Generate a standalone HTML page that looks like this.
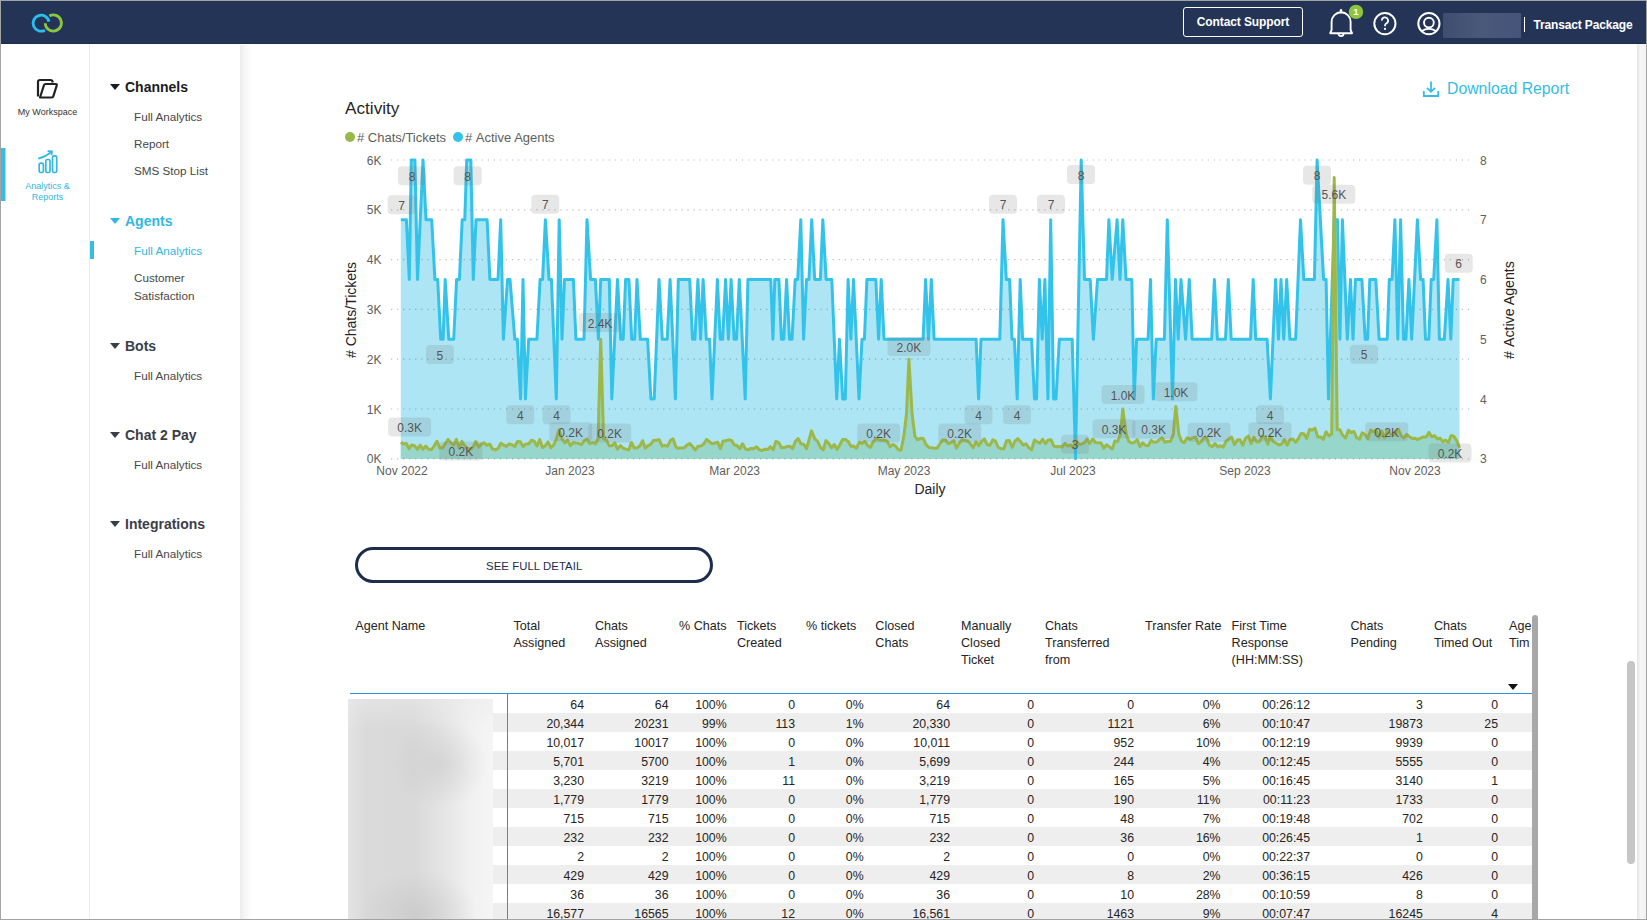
<!DOCTYPE html>
<html><head><meta charset="utf-8">
<style>
*{box-sizing:border-box;margin:0;padding:0}
html,body{width:1647px;height:920px;overflow:hidden;background:#fff;font-family:"Liberation Sans",sans-serif;color:#252423}
.abs{position:absolute}
#frame{position:absolute;left:0;top:0;width:1647px;height:920px;border:1px solid #a3a3a3;pointer-events:none;z-index:50}
#hdr{position:absolute;left:1px;top:1px;width:1645px;height:43px;background:#233457;box-shadow:inset 0 -1px 0 #1b2d50;z-index:5}
.btn-cs{position:absolute;left:1183px;top:7px;width:120px;height:30px;border:1.5px solid #fff;border-radius:3px;color:#fff;font-weight:bold;font-size:12px;line-height:27px;text-align:center;letter-spacing:-0.1px}
.tp{position:absolute;left:1534px;top:15px;color:#fff;font-weight:bold;font-size:12px;line-height:16px;letter-spacing:-0.15px}
.blurbox{position:absolute;left:1442px;top:13px;width:78px;height:25px;background:linear-gradient(90deg,#3f4e70,#4a587a 50%,#46547a)}
.hdiv{position:absolute;left:1524px;top:17px;width:1.5px;height:14px;background:#fff}
#rail{position:absolute;left:1px;top:44px;width:89px;height:875px;background:#fff;border-right:1px solid #ececec}
.rail-t{position:absolute;left:2px;width:89px;text-align:center;font-size:9px;line-height:11px}
#subnav{position:absolute;left:90px;top:44px;width:150px;height:875px;background:#fff}
#shadow{position:absolute;left:240px;top:45px;width:12px;height:874px;background:linear-gradient(90deg,#ececec,#f6f6f6 40%,#fff)}
.sec{position:absolute;left:125px;font-weight:bold;font-size:14px;line-height:18px;color:#1b1b1b}
.sec.blue{color:#31b7e3}
.sec.grey{color:#3b3e48}
.tri{position:absolute;left:110px;width:0;height:0;border-left:5px solid transparent;border-right:5px solid transparent;border-top:6px solid #1b1b1b}
.tri.blue{border-top-color:#31b7e3}
.tri.grey{border-top-color:#3b3e48}
.item{position:absolute;left:134px;font-size:11.7px;line-height:15px;color:#484848}
.item.blue{color:#31b7e3}
#main{position:absolute;left:240px;top:44px;width:1396px;height:875px;background:#fff}
.title{position:absolute;left:345px;top:97.5px;font-size:17.2px;line-height:20px;color:#252423}
.legend{position:absolute;top:130px;font-size:13px;line-height:15px;color:#605e5c}
.dot{position:absolute;top:132px;width:10px;height:10px;border-radius:50%}
.dl{position:absolute;left:1447px;top:78.7px;font-size:15.8px;line-height:19px;color:#33bde5}
#chart{position:absolute;left:0;top:0;width:1647px;height:920px}
#chart text{font-family:"Liberation Sans",sans-serif}
.ax{fill:#605e5c;font-size:12px}
.lab{fill:#555;font-size:12px}
.seebtn{position:absolute;left:355px;top:547px;width:358px;height:36px;border:3px solid #1e2d4b;border-radius:18px;font-size:11.3px;line-height:32px;color:#1e2d4b;padding-left:128px;letter-spacing:0.1px}
.th{position:absolute;top:617.5px;font-size:12.6px;line-height:17px;color:#252423;white-space:nowrap}
.cell{position:absolute;font-size:12.3px;line-height:19px;color:#252423;white-space:nowrap}
.rowbg{position:absolute;left:493px;width:1039px;height:19px;background:#eeeeee}
#tclip{position:absolute;left:340px;top:600px;width:1192px;height:319px;overflow:hidden}
</style></head>
<body>
<div id="hdr">
  <svg class="abs" style="left:0;top:0" width="1645" height="43" viewBox="1 1 1645 43">
    <path d="M48.9,21.6 A8,8 0 1 0 44.9,30.2" fill="none" stroke="#29c0ee" stroke-width="2.8"/>
    <path d="M45.2,23.3 A8.1,8.1 0 1 0 49.4,15.9" fill="none" stroke="#8cc63f" stroke-width="2.8"/>
    <!-- bell -->
    <path d="M1330.2,33.2 L1352,33.2 L1350.6,30 L1350.6,21.8 A9.5,9.5 0 0 0 1331.6,21.8 L1331.6,30 Z" fill="none" stroke="#fff" stroke-width="1.9" stroke-linejoin="round"/>
    <path d="M1341,12.2 L1341,10.2" stroke="#fff" stroke-width="2.4" stroke-linecap="round"/>
    <path d="M1338.4,33.6 A2.6,2.6 0 0 0 1343.6,33.6" fill="none" stroke="#fff" stroke-width="1.8"/>
    <circle cx="1356" cy="11.9" r="7.2" fill="#8cc63f"/>
    <text x="1356" y="15.2" text-anchor="middle" font-size="9.5" font-weight="bold" fill="#fff" font-family="Liberation Sans">1</text>
    <!-- help -->
    <circle cx="1384.9" cy="23.6" r="10.6" fill="none" stroke="#fff" stroke-width="2"/>
    <path d="M1381.9,20.6 A3.1,3.1 0 1 1 1386.5,23.2 Q1385,24 1385,25.6 L1385,26.2" fill="none" stroke="#fff" stroke-width="1.7"/>
    <circle cx="1385" cy="28.9" r="1.1" fill="#fff"/>
    <!-- user -->
    <circle cx="1428.9" cy="23.6" r="10.6" fill="none" stroke="#fff" stroke-width="2"/>
    <circle cx="1428.9" cy="22.6" r="4.9" fill="none" stroke="#fff" stroke-width="1.9"/>
    <path d="M1421.5,31.2 Q1428.9,26.2 1436.3,31.2" fill="none" stroke="#fff" stroke-width="1.9"/>
  </svg>
  <div class="btn-cs" style="top:6px;left:1182px;padding-top:1px">Contact Support</div>
  <div class="blurbox" style="top:12px"></div>
  <div class="hdiv" style="top:16px;left:1523px;width:1.2px;height:15px"></div>
  <div class="tp" style="top:15.7px;left:1532.5px">Transact Package</div>
</div>

<div id="rail">
  <svg class="abs" style="left:-1px;top:-44px" width="89" height="260" viewBox="0 0 89 260">
    <path d="M38,96.5 L38,82 Q38,80 40,80 L50.5,80 Q52.5,80 52.8,82.5" fill="none" stroke="#222" stroke-width="2.2" stroke-linejoin="round"/>
    <path d="M40,97.5 L44,85 Q44.5,84 45.5,84 L55.8,84 Q57.2,84 56.8,85.3 L53.3,96.3 Q53,97.5 51.7,97.5 Z" fill="none" stroke="#222" stroke-width="2.2" stroke-linejoin="round"/>
    <rect x="39.2" y="163.2" width="4.2" height="9.3" rx="1.6" fill="none" stroke="#31b7e3" stroke-width="1.7"/>
    <rect x="45.8" y="159.5" width="4.2" height="13" rx="1.6" fill="none" stroke="#31b7e3" stroke-width="1.7"/>
    <rect x="52.5" y="155.8" width="4.2" height="16.7" rx="1.6" fill="none" stroke="#31b7e3" stroke-width="1.7"/>
    <path d="M38.2,158.6 Q45,157 51.5,151.8" fill="none" stroke="#31b7e3" stroke-width="1.7"/>
    <path d="M47.6,151.2 L51.9,151.3 L51.6,155.3" fill="none" stroke="#31b7e3" stroke-width="1.7"/>
    <rect x="1" y="148" width="4.5" height="53" fill="#35bde6"/>
  </svg>
  <div class="rail-t" style="top:63px;color:#333">My Workspace</div>
  <div class="rail-t" style="top:137px;color:#31b7e3;line-height:10.5px">Analytics &amp;<br>Reports</div>
</div>

<div id="subnav"></div>
<div class="tri" style="top:84px"></div><div class="sec" style="top:78px">Channels</div>
<div class="item" style="top:109px">Full Analytics</div>
<div class="item" style="top:136px">Report</div>
<div class="item" style="top:163px">SMS Stop List</div>
<div class="tri blue" style="top:218px"></div><div class="sec blue" style="top:212px">Agents</div>
<div class="abs" style="left:90px;top:241px;width:4px;height:18px;background:#35bde6"></div>
<div class="item blue" style="top:243px">Full Analytics</div>
<div class="item" style="top:270px">Customer</div>
<div class="item" style="top:288px">Satisfaction</div>
<div class="tri grey" style="top:343px"></div><div class="sec grey" style="top:337px">Bots</div>
<div class="item" style="top:368px">Full Analytics</div>
<div class="tri grey" style="top:432px"></div><div class="sec grey" style="top:426px">Chat 2 Pay</div>
<div class="item" style="top:457px">Full Analytics</div>
<div class="tri grey" style="top:521px"></div><div class="sec grey" style="top:515px">Integrations</div>
<div class="item" style="top:546px">Full Analytics</div>

<div id="main"></div><div id="shadow"></div>
<div class="title">Activity</div>
<div class="dot" style="left:345px;background:#96b94a"></div>
<div class="legend" style="left:357px">#&nbsp;Chats/Tickets</div>
<div class="dot" style="left:453px;background:#33c3ea"></div>
<div class="legend" style="left:465px">#&nbsp;Active Agents</div>
<svg class="abs" style="left:1422px;top:80px" width="18" height="18" viewBox="0 0 18 18">
  <path d="M9,1.5 L9,11.5 M5,7.8 L9,11.8 L13,7.8 M1.8,11 L1.8,16 L16.2,16 L16.2,11" fill="none" stroke="#33bde5" stroke-width="1.8"/>
</svg>
<div class="dl">Download Report</div>

<svg id="chart" width="1647" height="920" viewBox="0 0 1647 920">
  <path d="M400.8,219.8 L406.4,219.8 L409.3,279.5 L411.3,160.0 L414.9,160.0 L417.5,279.5 L423.0,160.0 L426.0,219.8 L431.7,219.8 L434.9,279.5 L437.7,279.5 L440.7,339.3 L443.1,339.3 L445.2,279.5 L448.8,339.3 L453.7,339.3 L456.6,279.5 L459.4,279.5 L462.2,219.8 L464.8,219.8 L466.7,160.0 L470.8,160.0 L473.3,279.5 L476.0,219.8 L487.1,219.8 L489.9,279.5 L498.0,279.5 L500.7,219.8 L503.4,339.3 L507.5,279.5 L510.0,279.5 L514.8,339.3 L517.3,339.3 L520.6,399.0 L523.0,279.5 L525.4,399.0 L528.7,339.3 L536.9,339.3 L540.1,279.5 L542.6,279.5 L545.4,219.8 L549.0,279.5 L551.4,279.5 L556.3,399.0 L559.2,219.8 L562.0,339.3 L564.5,279.5 L573.4,279.5 L575.9,339.3 L584.0,339.3 L587.0,219.8 L590.6,279.5 L595.4,279.5 L598.4,339.3 L600.7,279.5 L609.3,279.5 L611.8,399.0 L617.5,279.5 L620.7,339.3 L623.2,339.3 L625.6,279.5 L628.9,279.5 L631.7,339.3 L634.6,339.3 L637.0,279.5 L640.3,339.3 L647.6,339.3 L650.9,399.0 L654.2,399.0 L659.0,279.5 L662.3,339.3 L667.2,339.3 L670.1,279.5 L675.4,399.0 L678.3,279.5 L689.7,279.5 L692.5,339.3 L694.9,339.3 L697.9,279.5 L700.6,339.3 L703.1,279.5 L706.3,339.3 L709.6,339.3 L712.0,399.0 L717.4,279.5 L720.2,339.3 L722.6,339.3 L725.6,279.5 L728.4,339.3 L731.1,279.5 L734.1,339.3 L736.5,339.3 L739.3,279.5 L745.2,399.0 L747.9,279.5 L770.8,279.5 L772.9,339.3 L774.8,279.5 L778.9,279.5 L781.4,339.3 L783.8,339.3 L786.6,279.5 L789.5,339.3 L792.0,339.3 L795.2,279.5 L797.7,279.5 L800.8,219.8 L803.6,339.3 L806.5,279.5 L809.0,279.5 L811.7,219.8 L814.7,279.5 L820.4,279.5 L822.8,219.8 L826.1,279.5 L831.8,279.5 L836.7,399.0 L839.5,339.3 L842.7,399.0 L845.3,399.0 L848.1,279.5 L850.9,339.3 L853.5,279.5 L859.0,399.0 L862.0,339.3 L864.4,339.3 L866.9,279.5 L875.8,279.5 L878.6,339.3 L881.2,279.5 L884.0,339.3 L923.1,339.3 L925.6,279.5 L928.5,339.3 L931.3,279.5 L934.1,339.3 L976.1,339.3 L978.6,399.0 L981.0,339.3 L999.8,339.3 L1003.0,219.8 L1006.3,279.5 L1009.6,279.5 L1012.0,339.3 L1014.4,339.3 L1017.2,399.0 L1020.2,279.5 L1022.6,339.3 L1031.6,339.3 L1034.5,399.0 L1036.5,399.0 L1039.4,279.5 L1042.2,339.3 L1044.9,279.5 L1047.9,399.0 L1050.7,219.8 L1053.6,399.0 L1056.0,399.0 L1059.3,339.3 L1072.2,339.3 L1075.5,458.8 L1081.2,160.0 L1084.5,279.5 L1090.2,279.5 L1093.4,339.3 L1097.5,279.5 L1106.5,279.5 L1108.9,219.8 L1112.2,279.5 L1117.1,219.8 L1120.0,279.5 L1122.8,219.8 L1126.0,279.5 L1131.8,279.5 L1134.2,399.0 L1136.6,339.3 L1148.1,339.3 L1150.5,279.5 L1153.3,399.0 L1156.2,339.3 L1164.4,339.3 L1167.3,219.8 L1172.5,399.0 L1175.5,279.5 L1178.2,339.3 L1181.0,279.5 L1185.6,339.3 L1189.3,279.5 L1192.1,339.3 L1211.7,339.3 L1214.4,279.5 L1217.4,339.3 L1225.5,339.3 L1228.3,279.5 L1231.2,339.3 L1250.5,339.3 L1253.2,279.5 L1255.7,339.3 L1267.1,339.3 L1270.4,399.0 L1275.6,279.5 L1278.5,339.3 L1281.0,279.5 L1283.7,339.3 L1286.7,279.5 L1289.9,339.3 L1295.6,339.3 L1300.5,219.8 L1303.8,279.5 L1314.4,279.5 L1317.1,160.0 L1323.6,279.5 L1326.1,279.5 L1328.5,399.0 L1334.2,219.8 L1337.5,219.8 L1339.9,339.3 L1342.4,219.8 L1347.3,339.3 L1350.5,279.5 L1353.0,339.3 L1355.4,279.5 L1361.9,279.5 L1365.2,339.3 L1367.6,339.3 L1369.8,279.5 L1375.8,279.5 L1379.1,339.3 L1387.2,339.3 L1389.3,279.5 L1392.1,279.5 L1394.9,219.8 L1397.8,339.3 L1400.6,219.8 L1403.5,339.3 L1405.9,339.3 L1408.9,279.5 L1411.7,339.3 L1417.4,219.8 L1420.6,279.5 L1423.1,279.5 L1425.5,339.3 L1428.8,339.3 L1431.2,279.5 L1433.7,279.5 L1436.9,219.8 L1439.4,339.3 L1444.3,339.3 L1448.0,279.5 L1450.8,339.3 L1453.2,279.5 L1459.5,279.5 L1459.5,458.8 L400.8,458.8 Z" fill="#ade5f4"/>
  <path d="M400.8,442.4 L403.6,443.9 L406.4,443.5 L409.1,448.7 L411.9,444.8 L414.7,445.9 L417.5,449.3 L420.3,445.2 L423.0,449.4 L425.8,446.0 L428.6,449.2 L431.4,449.6 L434.1,446.1 L436.9,441.2 L439.7,447.8 L442.5,447.9 L445.3,443.6 L448.0,439.5 L450.8,442.7 L453.6,445.1 L456.4,439.4 L459.2,448.3 L461.9,441.3 L464.7,446.0 L467.5,448.4 L470.3,449.2 L473.0,447.3 L475.8,441.5 L478.6,447.2 L481.4,444.0 L484.2,442.8 L486.9,445.4 L489.7,444.0 L492.5,448.9 L495.3,449.9 L498.1,448.5 L500.8,443.2 L503.6,444.9 L506.4,446.4 L509.2,443.8 L511.9,444.8 L514.7,446.6 L517.5,441.6 L520.3,441.8 L523.1,446.6 L525.8,444.0 L528.6,444.0 L531.4,440.3 L534.2,441.2 L537.0,446.0 L539.7,439.6 L542.5,447.5 L545.3,445.8 L548.1,441.9 L550.9,447.6 L553.6,445.1 L556.4,438.9 L559,429.9 L562.0,438.9 L564.7,443.0 L567.5,440.1 L570.3,445.6 L573.1,442.5 L575.9,443.0 L578.6,443.3 L581.4,444.6 L584.2,440.8 L587.0,439.0 L589.8,443.7 L592.5,442.5 L595.3,443.9 L598.1,438.9 L600.7,339.3 L603.6,438.8 L606.4,439.9 L609.2,445.8 L612.0,445.8 L614.8,442.8 L617.5,449.2 L620.3,445.6 L623.1,448.1 L625.9,449.1 L628.7,449.9 L631.4,442.5 L634.2,448.0 L637.0,447.7 L639.8,446.1 L642.6,440.7 L645.3,448.2 L648.1,445.6 L650.9,444.1 L653.7,440.2 L656.4,440.2 L659.2,439.7 L662.0,445.9 L664.8,445.5 L667.6,446.1 L670.3,440.6 L673.1,438.8 L675.9,447.1 L678.7,448.3 L681.5,447.9 L684.2,447.8 L687.0,445.1 L689.8,443.6 L692.6,446.7 L695.3,450.1 L698.1,446.2 L700.9,446.1 L703.7,444.0 L706.5,439.5 L709.2,441.5 L712.0,443.7 L714.8,443.0 L717.6,442.2 L720.4,448.7 L723.1,440.9 L725.9,440.8 L728.7,439.7 L731.5,440.4 L734.2,444.8 L737.0,445.5 L739.8,448.8 L742.6,443.7 L745.4,448.9 L748.1,449.8 L750.9,448.4 L753.7,448.7 L756.5,446.8 L759.3,449.6 L762.0,450.6 L764.8,449.2 L767.6,449.5 L770.4,446.7 L773.2,449.8 L775.9,441.4 L778.7,442.6 L781.5,447.8 L784.3,447.6 L787.0,446.6 L789.8,446.2 L792.6,448.7 L795.4,441.4 L798.2,438.6 L800.9,443.7 L803.7,444.4 L806.5,448.8 L809.3,438.9 L811.5,430.9 L814.8,438.9 L817.6,441.4 L820.4,447.4 L823.2,450.0 L825.9,440.6 L828.7,443.4 L831.5,447.9 L834.3,444.5 L837.1,449.4 L839.8,445.0 L842.6,439.4 L845.4,439.6 L848.2,441.4 L851.0,446.4 L853.7,446.1 L856.5,448.2 L859.3,442.2 L862.1,443.6 L864.8,441.3 L867.6,445.6 L870.4,447.5 L873.2,441.6 L876.0,438.7 L878.7,439.6 L881.5,440.3 L884.3,440.2 L887.1,441.1 L889.9,446.7 L892.6,444.6 L895.4,445.9 L898.2,449.6 L901.0,450.3 L903.8,436.4 L906.5,414.0 L908.9,359.2 L912.1,414.0 L914.9,436.4 L917.6,439.7 L920.4,438.3 L923.2,438.4 L926.0,444.7 L928.8,447.4 L931.5,447.8 L934.3,448.2 L937.1,448.2 L939.9,443.7 L942.7,440.0 L945.4,440.0 L948.2,443.8 L951.0,442.6 L953.8,440.9 L956.5,448.1 L959.3,443.3 L962.1,439.8 L964.9,440.5 L967.7,441.0 L970.4,444.0 L973.2,447.7 L976.0,441.9 L978.8,445.7 L981.6,441.4 L984.3,438.8 L987.1,444.5 L989.9,445.4 L992.7,439.8 L995.5,441.2 L998.2,447.3 L1001.0,448.8 L1003.8,448.8 L1006.6,440.8 L1009.3,440.4 L1012.1,447.3 L1014.9,441.3 L1017.7,438.6 L1020.5,441.5 L1023.2,445.2 L1026.0,443.8 L1028.8,447.9 L1031.6,449.9 L1034.4,440.1 L1037.1,441.7 L1039.9,443.2 L1042.7,439.2 L1045.5,443.7 L1048.2,439.9 L1051.0,439.7 L1053.8,446.1 L1056.6,446.8 L1059.4,446.5 L1062.1,447.0 L1064.9,443.4 L1067.7,446.1 L1070.5,444.9 L1073.3,447.7 L1076.0,440.0 L1078.8,444.4 L1081.6,444.1 L1084.4,442.7 L1087.1,439.0 L1089.9,443.5 L1092.7,439.0 L1095.5,442.5 L1098.3,442.8 L1101.0,443.0 L1103.8,448.3 L1106.6,444.8 L1109.4,446.9 L1112.2,449.1 L1114.9,441.0 L1117.7,441.4 L1120.5,433.9 L1122.8,409.0 L1126.1,433.9 L1128.8,441.4 L1131.6,443.1 L1134.4,442.4 L1137.2,439.8 L1139.9,446.5 L1142.7,442.9 L1145.5,445.5 L1148.3,445.7 L1151.1,440.4 L1153.8,442.2 L1156.6,442.0 L1159.4,439.8 L1162.2,437.8 L1165.0,442.4 L1167.7,441.4 L1170.5,441.4 L1173.3,433.9 L1175.8,406.5 L1178.8,433.9 L1181.6,441.4 L1184.4,442.6 L1187.2,437.7 L1190.0,439.4 L1192.7,437.8 L1195.5,436.8 L1198.3,443.8 L1201.1,441.9 L1203.9,437.5 L1206.6,437.7 L1209.4,445.2 L1212.2,446.7 L1215.0,443.5 L1217.7,446.9 L1220.5,445.7 L1223.3,447.2 L1226.1,441.1 L1228.9,438.8 L1231.6,437.1 L1234.4,444.7 L1237.2,440.1 L1240.0,439.8 L1242.8,445.2 L1245.5,438.3 L1248.3,436.2 L1251.1,443.7 L1253.9,437.3 L1256.7,442.0 L1259.4,441.8 L1262.2,436.4 L1265.0,437.1 L1267.8,444.3 L1270,436.4 L1273.3,441.6 L1276.1,443.2 L1278.9,445.0 L1281.7,444.0 L1284.4,439.5 L1287.2,445.3 L1290.0,439.7 L1292.8,439.0 L1295.6,442.3 L1298.3,438.6 L1301.1,433.4 L1303.9,433.7 L1306.7,438.5 L1309.4,429.6 L1312.2,430.1 L1315.0,428.2 L1317.8,437.1 L1320.6,437.0 L1323.3,439.3 L1326.1,431.9 L1328.9,436.0 L1331.7,433.9 L1334.2,177.4 L1337.2,429.8 L1340.0,429.8 L1342.8,435.7 L1345.6,438.0 L1348.4,430.2 L1351.1,432.5 L1353.9,431.5 L1356.7,437.8 L1359.5,439.3 L1362.2,432.9 L1365.0,434.5 L1367.8,438.5 L1370.6,430.1 L1373.4,431.8 L1376.1,430.3 L1378.9,437.7 L1381.7,430.8 L1384.5,437.9 L1387.3,430.8 L1390.0,433.8 L1392.8,435.6 L1395.6,433.6 L1398.4,429.3 L1401.1,435.5 L1403.9,438.1 L1406.7,434.4 L1409.5,436.8 L1412.3,438.6 L1415.0,438.3 L1417.8,439.5 L1420.6,438.1 L1423.4,436.9 L1426.2,437.0 L1428.9,432.4 L1431.7,436.8 L1434.5,435.6 L1437.3,439.0 L1440.0,438.1 L1442.8,441.6 L1445.6,440.0 L1448.4,442.5 L1451.2,435.5 L1453.9,436.4 L1456.7,440.6 L1459.5,447.8 L1459.5,458.8 L400.8,458.8 Z" fill="#97d6cb"/>
  <g stroke="rgba(0,0,0,0.26)" stroke-width="1.2" stroke-dasharray="1.2,4.85">
  <line x1="391" y1="160.0" x2="1472" y2="160.0"/>
<line x1="391" y1="209.8" x2="1472" y2="209.8"/>
<line x1="391" y1="259.6" x2="1472" y2="259.6"/>
<line x1="391" y1="309.4" x2="1472" y2="309.4"/>
<line x1="391" y1="359.2" x2="1472" y2="359.2"/>
<line x1="391" y1="409.0" x2="1472" y2="409.0"/>
<line x1="391" y1="458.8" x2="1472" y2="458.8"/>
  </g>
  <path d="M400.8,219.8 L406.4,219.8 L409.3,279.5 L411.3,160.0 L414.9,160.0 L417.5,279.5 L423.0,160.0 L426.0,219.8 L431.7,219.8 L434.9,279.5 L437.7,279.5 L440.7,339.3 L443.1,339.3 L445.2,279.5 L448.8,339.3 L453.7,339.3 L456.6,279.5 L459.4,279.5 L462.2,219.8 L464.8,219.8 L466.7,160.0 L470.8,160.0 L473.3,279.5 L476.0,219.8 L487.1,219.8 L489.9,279.5 L498.0,279.5 L500.7,219.8 L503.4,339.3 L507.5,279.5 L510.0,279.5 L514.8,339.3 L517.3,339.3 L520.6,399.0 L523.0,279.5 L525.4,399.0 L528.7,339.3 L536.9,339.3 L540.1,279.5 L542.6,279.5 L545.4,219.8 L549.0,279.5 L551.4,279.5 L556.3,399.0 L559.2,219.8 L562.0,339.3 L564.5,279.5 L573.4,279.5 L575.9,339.3 L584.0,339.3 L587.0,219.8 L590.6,279.5 L595.4,279.5 L598.4,339.3 L600.7,279.5 L609.3,279.5 L611.8,399.0 L617.5,279.5 L620.7,339.3 L623.2,339.3 L625.6,279.5 L628.9,279.5 L631.7,339.3 L634.6,339.3 L637.0,279.5 L640.3,339.3 L647.6,339.3 L650.9,399.0 L654.2,399.0 L659.0,279.5 L662.3,339.3 L667.2,339.3 L670.1,279.5 L675.4,399.0 L678.3,279.5 L689.7,279.5 L692.5,339.3 L694.9,339.3 L697.9,279.5 L700.6,339.3 L703.1,279.5 L706.3,339.3 L709.6,339.3 L712.0,399.0 L717.4,279.5 L720.2,339.3 L722.6,339.3 L725.6,279.5 L728.4,339.3 L731.1,279.5 L734.1,339.3 L736.5,339.3 L739.3,279.5 L745.2,399.0 L747.9,279.5 L770.8,279.5 L772.9,339.3 L774.8,279.5 L778.9,279.5 L781.4,339.3 L783.8,339.3 L786.6,279.5 L789.5,339.3 L792.0,339.3 L795.2,279.5 L797.7,279.5 L800.8,219.8 L803.6,339.3 L806.5,279.5 L809.0,279.5 L811.7,219.8 L814.7,279.5 L820.4,279.5 L822.8,219.8 L826.1,279.5 L831.8,279.5 L836.7,399.0 L839.5,339.3 L842.7,399.0 L845.3,399.0 L848.1,279.5 L850.9,339.3 L853.5,279.5 L859.0,399.0 L862.0,339.3 L864.4,339.3 L866.9,279.5 L875.8,279.5 L878.6,339.3 L881.2,279.5 L884.0,339.3 L923.1,339.3 L925.6,279.5 L928.5,339.3 L931.3,279.5 L934.1,339.3 L976.1,339.3 L978.6,399.0 L981.0,339.3 L999.8,339.3 L1003.0,219.8 L1006.3,279.5 L1009.6,279.5 L1012.0,339.3 L1014.4,339.3 L1017.2,399.0 L1020.2,279.5 L1022.6,339.3 L1031.6,339.3 L1034.5,399.0 L1036.5,399.0 L1039.4,279.5 L1042.2,339.3 L1044.9,279.5 L1047.9,399.0 L1050.7,219.8 L1053.6,399.0 L1056.0,399.0 L1059.3,339.3 L1072.2,339.3 L1075.5,458.8 L1081.2,160.0 L1084.5,279.5 L1090.2,279.5 L1093.4,339.3 L1097.5,279.5 L1106.5,279.5 L1108.9,219.8 L1112.2,279.5 L1117.1,219.8 L1120.0,279.5 L1122.8,219.8 L1126.0,279.5 L1131.8,279.5 L1134.2,399.0 L1136.6,339.3 L1148.1,339.3 L1150.5,279.5 L1153.3,399.0 L1156.2,339.3 L1164.4,339.3 L1167.3,219.8 L1172.5,399.0 L1175.5,279.5 L1178.2,339.3 L1181.0,279.5 L1185.6,339.3 L1189.3,279.5 L1192.1,339.3 L1211.7,339.3 L1214.4,279.5 L1217.4,339.3 L1225.5,339.3 L1228.3,279.5 L1231.2,339.3 L1250.5,339.3 L1253.2,279.5 L1255.7,339.3 L1267.1,339.3 L1270.4,399.0 L1275.6,279.5 L1278.5,339.3 L1281.0,279.5 L1283.7,339.3 L1286.7,279.5 L1289.9,339.3 L1295.6,339.3 L1300.5,219.8 L1303.8,279.5 L1314.4,279.5 L1317.1,160.0 L1323.6,279.5 L1326.1,279.5 L1328.5,399.0 L1334.2,219.8 L1337.5,219.8 L1339.9,339.3 L1342.4,219.8 L1347.3,339.3 L1350.5,279.5 L1353.0,339.3 L1355.4,279.5 L1361.9,279.5 L1365.2,339.3 L1367.6,339.3 L1369.8,279.5 L1375.8,279.5 L1379.1,339.3 L1387.2,339.3 L1389.3,279.5 L1392.1,279.5 L1394.9,219.8 L1397.8,339.3 L1400.6,219.8 L1403.5,339.3 L1405.9,339.3 L1408.9,279.5 L1411.7,339.3 L1417.4,219.8 L1420.6,279.5 L1423.1,279.5 L1425.5,339.3 L1428.8,339.3 L1431.2,279.5 L1433.7,279.5 L1436.9,219.8 L1439.4,339.3 L1444.3,339.3 L1448.0,279.5 L1450.8,339.3 L1453.2,279.5 L1459.5,279.5" fill="none" stroke="#33c3ea" stroke-width="3" stroke-linejoin="round"/>
  <path d="M400.8,442.4 L403.6,443.9 L406.4,443.5 L409.1,448.7 L411.9,444.8 L414.7,445.9 L417.5,449.3 L420.3,445.2 L423.0,449.4 L425.8,446.0 L428.6,449.2 L431.4,449.6 L434.1,446.1 L436.9,441.2 L439.7,447.8 L442.5,447.9 L445.3,443.6 L448.0,439.5 L450.8,442.7 L453.6,445.1 L456.4,439.4 L459.2,448.3 L461.9,441.3 L464.7,446.0 L467.5,448.4 L470.3,449.2 L473.0,447.3 L475.8,441.5 L478.6,447.2 L481.4,444.0 L484.2,442.8 L486.9,445.4 L489.7,444.0 L492.5,448.9 L495.3,449.9 L498.1,448.5 L500.8,443.2 L503.6,444.9 L506.4,446.4 L509.2,443.8 L511.9,444.8 L514.7,446.6 L517.5,441.6 L520.3,441.8 L523.1,446.6 L525.8,444.0 L528.6,444.0 L531.4,440.3 L534.2,441.2 L537.0,446.0 L539.7,439.6 L542.5,447.5 L545.3,445.8 L548.1,441.9 L550.9,447.6 L553.6,445.1 L556.4,438.9 L559,429.9 L562.0,438.9 L564.7,443.0 L567.5,440.1 L570.3,445.6 L573.1,442.5 L575.9,443.0 L578.6,443.3 L581.4,444.6 L584.2,440.8 L587.0,439.0 L589.8,443.7 L592.5,442.5 L595.3,443.9 L598.1,438.9 L600.7,339.3 L603.6,438.8 L606.4,439.9 L609.2,445.8 L612.0,445.8 L614.8,442.8 L617.5,449.2 L620.3,445.6 L623.1,448.1 L625.9,449.1 L628.7,449.9 L631.4,442.5 L634.2,448.0 L637.0,447.7 L639.8,446.1 L642.6,440.7 L645.3,448.2 L648.1,445.6 L650.9,444.1 L653.7,440.2 L656.4,440.2 L659.2,439.7 L662.0,445.9 L664.8,445.5 L667.6,446.1 L670.3,440.6 L673.1,438.8 L675.9,447.1 L678.7,448.3 L681.5,447.9 L684.2,447.8 L687.0,445.1 L689.8,443.6 L692.6,446.7 L695.3,450.1 L698.1,446.2 L700.9,446.1 L703.7,444.0 L706.5,439.5 L709.2,441.5 L712.0,443.7 L714.8,443.0 L717.6,442.2 L720.4,448.7 L723.1,440.9 L725.9,440.8 L728.7,439.7 L731.5,440.4 L734.2,444.8 L737.0,445.5 L739.8,448.8 L742.6,443.7 L745.4,448.9 L748.1,449.8 L750.9,448.4 L753.7,448.7 L756.5,446.8 L759.3,449.6 L762.0,450.6 L764.8,449.2 L767.6,449.5 L770.4,446.7 L773.2,449.8 L775.9,441.4 L778.7,442.6 L781.5,447.8 L784.3,447.6 L787.0,446.6 L789.8,446.2 L792.6,448.7 L795.4,441.4 L798.2,438.6 L800.9,443.7 L803.7,444.4 L806.5,448.8 L809.3,438.9 L811.5,430.9 L814.8,438.9 L817.6,441.4 L820.4,447.4 L823.2,450.0 L825.9,440.6 L828.7,443.4 L831.5,447.9 L834.3,444.5 L837.1,449.4 L839.8,445.0 L842.6,439.4 L845.4,439.6 L848.2,441.4 L851.0,446.4 L853.7,446.1 L856.5,448.2 L859.3,442.2 L862.1,443.6 L864.8,441.3 L867.6,445.6 L870.4,447.5 L873.2,441.6 L876.0,438.7 L878.7,439.6 L881.5,440.3 L884.3,440.2 L887.1,441.1 L889.9,446.7 L892.6,444.6 L895.4,445.9 L898.2,449.6 L901.0,450.3 L903.8,436.4 L906.5,414.0 L908.9,359.2 L912.1,414.0 L914.9,436.4 L917.6,439.7 L920.4,438.3 L923.2,438.4 L926.0,444.7 L928.8,447.4 L931.5,447.8 L934.3,448.2 L937.1,448.2 L939.9,443.7 L942.7,440.0 L945.4,440.0 L948.2,443.8 L951.0,442.6 L953.8,440.9 L956.5,448.1 L959.3,443.3 L962.1,439.8 L964.9,440.5 L967.7,441.0 L970.4,444.0 L973.2,447.7 L976.0,441.9 L978.8,445.7 L981.6,441.4 L984.3,438.8 L987.1,444.5 L989.9,445.4 L992.7,439.8 L995.5,441.2 L998.2,447.3 L1001.0,448.8 L1003.8,448.8 L1006.6,440.8 L1009.3,440.4 L1012.1,447.3 L1014.9,441.3 L1017.7,438.6 L1020.5,441.5 L1023.2,445.2 L1026.0,443.8 L1028.8,447.9 L1031.6,449.9 L1034.4,440.1 L1037.1,441.7 L1039.9,443.2 L1042.7,439.2 L1045.5,443.7 L1048.2,439.9 L1051.0,439.7 L1053.8,446.1 L1056.6,446.8 L1059.4,446.5 L1062.1,447.0 L1064.9,443.4 L1067.7,446.1 L1070.5,444.9 L1073.3,447.7 L1076.0,440.0 L1078.8,444.4 L1081.6,444.1 L1084.4,442.7 L1087.1,439.0 L1089.9,443.5 L1092.7,439.0 L1095.5,442.5 L1098.3,442.8 L1101.0,443.0 L1103.8,448.3 L1106.6,444.8 L1109.4,446.9 L1112.2,449.1 L1114.9,441.0 L1117.7,441.4 L1120.5,433.9 L1122.8,409.0 L1126.1,433.9 L1128.8,441.4 L1131.6,443.1 L1134.4,442.4 L1137.2,439.8 L1139.9,446.5 L1142.7,442.9 L1145.5,445.5 L1148.3,445.7 L1151.1,440.4 L1153.8,442.2 L1156.6,442.0 L1159.4,439.8 L1162.2,437.8 L1165.0,442.4 L1167.7,441.4 L1170.5,441.4 L1173.3,433.9 L1175.8,406.5 L1178.8,433.9 L1181.6,441.4 L1184.4,442.6 L1187.2,437.7 L1190.0,439.4 L1192.7,437.8 L1195.5,436.8 L1198.3,443.8 L1201.1,441.9 L1203.9,437.5 L1206.6,437.7 L1209.4,445.2 L1212.2,446.7 L1215.0,443.5 L1217.7,446.9 L1220.5,445.7 L1223.3,447.2 L1226.1,441.1 L1228.9,438.8 L1231.6,437.1 L1234.4,444.7 L1237.2,440.1 L1240.0,439.8 L1242.8,445.2 L1245.5,438.3 L1248.3,436.2 L1251.1,443.7 L1253.9,437.3 L1256.7,442.0 L1259.4,441.8 L1262.2,436.4 L1265.0,437.1 L1267.8,444.3 L1270,436.4 L1273.3,441.6 L1276.1,443.2 L1278.9,445.0 L1281.7,444.0 L1284.4,439.5 L1287.2,445.3 L1290.0,439.7 L1292.8,439.0 L1295.6,442.3 L1298.3,438.6 L1301.1,433.4 L1303.9,433.7 L1306.7,438.5 L1309.4,429.6 L1312.2,430.1 L1315.0,428.2 L1317.8,437.1 L1320.6,437.0 L1323.3,439.3 L1326.1,431.9 L1328.9,436.0 L1331.7,433.9 L1334.2,177.4 L1337.2,429.8 L1340.0,429.8 L1342.8,435.7 L1345.6,438.0 L1348.4,430.2 L1351.1,432.5 L1353.9,431.5 L1356.7,437.8 L1359.5,439.3 L1362.2,432.9 L1365.0,434.5 L1367.8,438.5 L1370.6,430.1 L1373.4,431.8 L1376.1,430.3 L1378.9,437.7 L1381.7,430.8 L1384.5,437.9 L1387.3,430.8 L1390.0,433.8 L1392.8,435.6 L1395.6,433.6 L1398.4,429.3 L1401.1,435.5 L1403.9,438.1 L1406.7,434.4 L1409.5,436.8 L1412.3,438.6 L1415.0,438.3 L1417.8,439.5 L1420.6,438.1 L1423.4,436.9 L1426.2,437.0 L1428.9,432.4 L1431.7,436.8 L1434.5,435.6 L1437.3,439.0 L1440.0,438.1 L1442.8,441.6 L1445.6,440.0 L1448.4,442.5 L1451.2,435.5 L1453.9,436.4 L1456.7,440.6 L1459.5,447.8" fill="none" stroke="#9db848" stroke-width="3" stroke-linejoin="round"/>
  <g class="lab">
  <rect x="387.6" y="195.2" width="28" height="19" rx="4" fill="rgba(110,110,110,0.17)"/><text x="401.6" y="209.8" text-anchor="middle">7</text>
<rect x="398.0" y="166.2" width="28" height="19" rx="4" fill="rgba(110,110,110,0.17)"/><text x="412.0" y="180.8" text-anchor="middle">8</text>
<rect x="453.7" y="166.2" width="28" height="19" rx="4" fill="rgba(110,110,110,0.17)"/><text x="467.7" y="180.8" text-anchor="middle">8</text>
<rect x="425.9" y="345.1" width="28" height="19" rx="4" fill="rgba(110,110,110,0.17)"/><text x="439.9" y="359.7" text-anchor="middle">5</text>
<rect x="531.3" y="194.7" width="28" height="19" rx="4" fill="rgba(110,110,110,0.17)"/><text x="545.3" y="209.3" text-anchor="middle">7</text>
<rect x="506.3" y="405.3" width="28" height="19" rx="4" fill="rgba(110,110,110,0.17)"/><text x="520.3" y="419.9" text-anchor="middle">4</text>
<rect x="542.5" y="405.3" width="28" height="19" rx="4" fill="rgba(110,110,110,0.17)"/><text x="556.5" y="419.9" text-anchor="middle">4</text>
<rect x="578.5" y="313.0" width="43" height="19" rx="4" fill="rgba(110,110,110,0.17)"/><text x="600.0" y="327.6" text-anchor="middle">2.4K</text>
<rect x="388.1" y="417.5" width="43" height="19" rx="4" fill="rgba(110,110,110,0.17)"/><text x="409.6" y="432.1" text-anchor="middle">0.3K</text>
<rect x="439.3" y="441.5" width="43" height="19" rx="4" fill="rgba(110,110,110,0.17)"/><text x="460.8" y="456.1" text-anchor="middle">0.2K</text>
<rect x="549.2" y="422.3" width="43" height="19" rx="4" fill="rgba(110,110,110,0.17)"/><text x="570.7" y="436.9" text-anchor="middle">0.2K</text>
<rect x="588.2" y="423.4" width="43" height="19" rx="4" fill="rgba(110,110,110,0.17)"/><text x="609.7" y="438.0" text-anchor="middle">0.2K</text>
<rect x="887.4" y="337.1" width="43" height="19" rx="4" fill="rgba(110,110,110,0.17)"/><text x="908.9" y="351.7" text-anchor="middle">2.0K</text>
<rect x="857.1" y="423.4" width="43" height="19" rx="4" fill="rgba(110,110,110,0.17)"/><text x="878.6" y="438.0" text-anchor="middle">0.2K</text>
<rect x="938.2" y="423.4" width="43" height="19" rx="4" fill="rgba(110,110,110,0.17)"/><text x="959.7" y="438.0" text-anchor="middle">0.2K</text>
<rect x="964.5" y="405.3" width="28" height="19" rx="4" fill="rgba(110,110,110,0.17)"/><text x="978.5" y="419.9" text-anchor="middle">4</text>
<rect x="1003.0" y="405.3" width="28" height="19" rx="4" fill="rgba(110,110,110,0.17)"/><text x="1017.0" y="419.9" text-anchor="middle">4</text>
<rect x="989.0" y="194.7" width="28" height="19" rx="4" fill="rgba(110,110,110,0.17)"/><text x="1003.0" y="209.3" text-anchor="middle">7</text>
<rect x="1037.0" y="194.7" width="28" height="19" rx="4" fill="rgba(110,110,110,0.17)"/><text x="1051.0" y="209.3" text-anchor="middle">7</text>
<rect x="1067.0" y="165.1" width="28" height="19" rx="4" fill="rgba(110,110,110,0.17)"/><text x="1081.0" y="179.7" text-anchor="middle">8</text>
<rect x="1061.0" y="434.7" width="28" height="19" rx="4" fill="rgba(110,110,110,0.17)"/><text x="1075.0" y="449.3" text-anchor="middle">3</text>
<rect x="1101.5" y="385.1" width="43" height="19" rx="4" fill="rgba(110,110,110,0.17)"/><text x="1123.0" y="399.7" text-anchor="middle">1.0K</text>
<rect x="1154.5" y="382.3" width="43" height="19" rx="4" fill="rgba(110,110,110,0.17)"/><text x="1176.0" y="396.9" text-anchor="middle">1.0K</text>
<rect x="1092.5" y="419.2" width="43" height="19" rx="4" fill="rgba(110,110,110,0.17)"/><text x="1114.0" y="433.8" text-anchor="middle">0.3K</text>
<rect x="1132.1" y="419.7" width="43" height="19" rx="4" fill="rgba(110,110,110,0.17)"/><text x="1153.6" y="434.3" text-anchor="middle">0.3K</text>
<rect x="1187.5" y="422.7" width="43" height="19" rx="4" fill="rgba(110,110,110,0.17)"/><text x="1209.0" y="437.3" text-anchor="middle">0.2K</text>
<rect x="1303.0" y="165.7" width="28" height="19" rx="4" fill="rgba(110,110,110,0.17)"/><text x="1317.0" y="180.3" text-anchor="middle">8</text>
<rect x="1312.3" y="184.7" width="43" height="19" rx="4" fill="rgba(110,110,110,0.17)"/><text x="1333.8" y="199.3" text-anchor="middle">5.6K</text>
<rect x="1444.7" y="253.7" width="28" height="19" rx="4" fill="rgba(110,110,110,0.17)"/><text x="1458.7" y="268.3" text-anchor="middle">6</text>
<rect x="1350.0" y="344.7" width="28" height="19" rx="4" fill="rgba(110,110,110,0.17)"/><text x="1364.0" y="359.3" text-anchor="middle">5</text>
<rect x="1256.0" y="405.3" width="28" height="19" rx="4" fill="rgba(110,110,110,0.17)"/><text x="1270.0" y="419.9" text-anchor="middle">4</text>
<rect x="1248.5" y="422.3" width="43" height="19" rx="4" fill="rgba(110,110,110,0.17)"/><text x="1270.0" y="436.9" text-anchor="middle">0.2K</text>
<rect x="1365.2" y="422.3" width="43" height="19" rx="4" fill="rgba(110,110,110,0.17)"/><text x="1386.7" y="436.9" text-anchor="middle">0.2K</text>
<rect x="1428.5" y="443.6" width="43" height="19" rx="4" fill="rgba(110,110,110,0.17)"/><text x="1450.0" y="458.2" text-anchor="middle">0.2K</text>
  </g>
  <g class="ax">
  <text x="381.5" y="164.5" text-anchor="end">6K</text>
<text x="381.5" y="214.3" text-anchor="end">5K</text>
<text x="381.5" y="264.1" text-anchor="end">4K</text>
<text x="381.5" y="313.9" text-anchor="end">3K</text>
<text x="381.5" y="363.7" text-anchor="end">2K</text>
<text x="381.5" y="413.5" text-anchor="end">1K</text>
<text x="381.5" y="463.3" text-anchor="end">0K</text>
<text x="1480" y="164.5">8</text>
<text x="1480" y="224.3">7</text>
<text x="1480" y="284.0">6</text>
<text x="1480" y="343.8">5</text>
<text x="1480" y="403.5">4</text>
<text x="1480" y="463.3">3</text>
<text x="402" y="474.6" text-anchor="middle">Nov 2022</text>
<text x="570" y="474.6" text-anchor="middle">Jan 2023</text>
<text x="734.7" y="474.6" text-anchor="middle">Mar 2023</text>
<text x="904" y="474.6" text-anchor="middle">May 2023</text>
<text x="1073" y="474.6" text-anchor="middle">Jul 2023</text>
<text x="1245" y="474.6" text-anchor="middle">Sep 2023</text>
<text x="1415" y="474.6" text-anchor="middle">Nov 2023</text>
  </g>
  <text x="930" y="494" text-anchor="middle" font-size="14" fill="#252423">Daily</text>
  <text transform="translate(356,310) rotate(-90)" text-anchor="middle" font-size="14" fill="#252423">#&#160;Chats/Tickets</text>
  <text transform="translate(1514,310) rotate(-90)" text-anchor="middle" font-size="14.2" fill="#252423">#&#160;Active Agents</text>
</svg>

<div class="seebtn">SEE FULL DETAIL</div>

<div class="th" style="left:355.3px">Agent Name</div>
<div class="th" style="left:513.4px">Total<br>Assigned</div>
<div class="th" style="left:595px">Chats<br>Assigned</div>
<div class="th" style="left:679px">% Chats</div>
<div class="th" style="left:737px">Tickets<br>Created</div>
<div class="th" style="left:806px">% tickets</div>
<div class="th" style="left:875.3px">Closed<br>Chats</div>
<div class="th" style="left:961px">Manually<br>Closed<br>Ticket</div>
<div class="th" style="left:1045px">Chats<br>Transferred<br>from</div>
<div class="th" style="left:1145px">Transfer Rate</div>
<div class="th" style="left:1231.6px">First Time<br>Response<br>(HH:MM:SS)</div>
<div class="th" style="left:1350.5px">Chats<br>Pending</div>
<div class="th" style="left:1434px">Chats<br>Timed Out</div>
<div class="th" style="left:1509px">Age<br>Tim</div>
<div class="abs" style="left:350px;top:693px;width:1182px;height:1px;background:#2f8fe0"></div>
<svg class="abs" style="left:1508px;top:684px" width="10" height="6"><path d="M0,0 L10,0 L5,6 Z" fill="#111"/></svg>
<div class="abs" style="left:348px;top:699px;width:145px;height:220px;overflow:hidden;background:linear-gradient(90deg,#e3e3e3 0%,#dadada 12%,#d9d9d9 45%,#e6e6e6 68%,#f1f1f1 85%,#f5f5f5 100%)">
<div class="abs" style="left:40px;top:20px;width:100px;height:90px;background:radial-gradient(ellipse at center,rgba(200,200,200,0.55),rgba(200,200,200,0) 70%)"></div>
<div class="abs" style="left:10px;top:170px;width:120px;height:90px;background:radial-gradient(ellipse at center,rgba(195,195,195,0.6),rgba(195,195,195,0) 70%)"></div>
<div class="abs" style="left:0;top:0;width:145px;height:30px;background:linear-gradient(180deg,rgba(235,235,235,0.5),rgba(235,235,235,0))"></div>
</div>
<div class="cell" style="top:695.7px;right:1063.0px">64</div>
<div class="cell" style="top:695.7px;right:978.5px">64</div>
<div class="cell" style="top:695.7px;right:920.4px">100%</div>
<div class="cell" style="top:695.7px;right:852.0px">0</div>
<div class="cell" style="top:695.7px;right:783.4px">0%</div>
<div class="cell" style="top:695.7px;right:697.0px">64</div>
<div class="cell" style="top:695.7px;right:613.0px">0</div>
<div class="cell" style="top:695.7px;right:513.0px">0</div>
<div class="cell" style="top:695.7px;right:426.5px">0%</div>
<div class="cell" style="top:695.7px;right:337.0px">00:26:12</div>
<div class="cell" style="top:695.7px;right:224.2px">3</div>
<div class="cell" style="top:695.7px;right:149.0px">0</div>
<div class="rowbg" style="top:713.0px"></div>
<div class="cell" style="top:714.7px;right:1063.0px">20,344</div>
<div class="cell" style="top:714.7px;right:978.5px">20231</div>
<div class="cell" style="top:714.7px;right:920.4px">99%</div>
<div class="cell" style="top:714.7px;right:852.0px">113</div>
<div class="cell" style="top:714.7px;right:783.4px">1%</div>
<div class="cell" style="top:714.7px;right:697.0px">20,330</div>
<div class="cell" style="top:714.7px;right:613.0px">0</div>
<div class="cell" style="top:714.7px;right:513.0px">1121</div>
<div class="cell" style="top:714.7px;right:426.5px">6%</div>
<div class="cell" style="top:714.7px;right:337.0px">00:10:47</div>
<div class="cell" style="top:714.7px;right:224.2px">19873</div>
<div class="cell" style="top:714.7px;right:149.0px">25</div>
<div class="cell" style="top:733.8px;right:1063.0px">10,017</div>
<div class="cell" style="top:733.8px;right:978.5px">10017</div>
<div class="cell" style="top:733.8px;right:920.4px">100%</div>
<div class="cell" style="top:733.8px;right:852.0px">0</div>
<div class="cell" style="top:733.8px;right:783.4px">0%</div>
<div class="cell" style="top:733.8px;right:697.0px">10,011</div>
<div class="cell" style="top:733.8px;right:613.0px">0</div>
<div class="cell" style="top:733.8px;right:513.0px">952</div>
<div class="cell" style="top:733.8px;right:426.5px">10%</div>
<div class="cell" style="top:733.8px;right:337.0px">00:12:19</div>
<div class="cell" style="top:733.8px;right:224.2px">9939</div>
<div class="cell" style="top:733.8px;right:149.0px">0</div>
<div class="rowbg" style="top:751.1px"></div>
<div class="cell" style="top:752.8px;right:1063.0px">5,701</div>
<div class="cell" style="top:752.8px;right:978.5px">5700</div>
<div class="cell" style="top:752.8px;right:920.4px">100%</div>
<div class="cell" style="top:752.8px;right:852.0px">1</div>
<div class="cell" style="top:752.8px;right:783.4px">0%</div>
<div class="cell" style="top:752.8px;right:697.0px">5,699</div>
<div class="cell" style="top:752.8px;right:613.0px">0</div>
<div class="cell" style="top:752.8px;right:513.0px">244</div>
<div class="cell" style="top:752.8px;right:426.5px">4%</div>
<div class="cell" style="top:752.8px;right:337.0px">00:12:45</div>
<div class="cell" style="top:752.8px;right:224.2px">5555</div>
<div class="cell" style="top:752.8px;right:149.0px">0</div>
<div class="cell" style="top:771.9px;right:1063.0px">3,230</div>
<div class="cell" style="top:771.9px;right:978.5px">3219</div>
<div class="cell" style="top:771.9px;right:920.4px">100%</div>
<div class="cell" style="top:771.9px;right:852.0px">11</div>
<div class="cell" style="top:771.9px;right:783.4px">0%</div>
<div class="cell" style="top:771.9px;right:697.0px">3,219</div>
<div class="cell" style="top:771.9px;right:613.0px">0</div>
<div class="cell" style="top:771.9px;right:513.0px">165</div>
<div class="cell" style="top:771.9px;right:426.5px">5%</div>
<div class="cell" style="top:771.9px;right:337.0px">00:16:45</div>
<div class="cell" style="top:771.9px;right:224.2px">3140</div>
<div class="cell" style="top:771.9px;right:149.0px">1</div>
<div class="rowbg" style="top:789.2px"></div>
<div class="cell" style="top:790.9px;right:1063.0px">1,779</div>
<div class="cell" style="top:790.9px;right:978.5px">1779</div>
<div class="cell" style="top:790.9px;right:920.4px">100%</div>
<div class="cell" style="top:790.9px;right:852.0px">0</div>
<div class="cell" style="top:790.9px;right:783.4px">0%</div>
<div class="cell" style="top:790.9px;right:697.0px">1,779</div>
<div class="cell" style="top:790.9px;right:613.0px">0</div>
<div class="cell" style="top:790.9px;right:513.0px">190</div>
<div class="cell" style="top:790.9px;right:426.5px">11%</div>
<div class="cell" style="top:790.9px;right:337.0px">00:11:23</div>
<div class="cell" style="top:790.9px;right:224.2px">1733</div>
<div class="cell" style="top:790.9px;right:149.0px">0</div>
<div class="cell" style="top:809.9px;right:1063.0px">715</div>
<div class="cell" style="top:809.9px;right:978.5px">715</div>
<div class="cell" style="top:809.9px;right:920.4px">100%</div>
<div class="cell" style="top:809.9px;right:852.0px">0</div>
<div class="cell" style="top:809.9px;right:783.4px">0%</div>
<div class="cell" style="top:809.9px;right:697.0px">715</div>
<div class="cell" style="top:809.9px;right:613.0px">0</div>
<div class="cell" style="top:809.9px;right:513.0px">48</div>
<div class="cell" style="top:809.9px;right:426.5px">7%</div>
<div class="cell" style="top:809.9px;right:337.0px">00:19:48</div>
<div class="cell" style="top:809.9px;right:224.2px">702</div>
<div class="cell" style="top:809.9px;right:149.0px">0</div>
<div class="rowbg" style="top:827.3px"></div>
<div class="cell" style="top:829.0px;right:1063.0px">232</div>
<div class="cell" style="top:829.0px;right:978.5px">232</div>
<div class="cell" style="top:829.0px;right:920.4px">100%</div>
<div class="cell" style="top:829.0px;right:852.0px">0</div>
<div class="cell" style="top:829.0px;right:783.4px">0%</div>
<div class="cell" style="top:829.0px;right:697.0px">232</div>
<div class="cell" style="top:829.0px;right:613.0px">0</div>
<div class="cell" style="top:829.0px;right:513.0px">36</div>
<div class="cell" style="top:829.0px;right:426.5px">16%</div>
<div class="cell" style="top:829.0px;right:337.0px">00:26:45</div>
<div class="cell" style="top:829.0px;right:224.2px">1</div>
<div class="cell" style="top:829.0px;right:149.0px">0</div>
<div class="cell" style="top:848.0px;right:1063.0px">2</div>
<div class="cell" style="top:848.0px;right:978.5px">2</div>
<div class="cell" style="top:848.0px;right:920.4px">100%</div>
<div class="cell" style="top:848.0px;right:852.0px">0</div>
<div class="cell" style="top:848.0px;right:783.4px">0%</div>
<div class="cell" style="top:848.0px;right:697.0px">2</div>
<div class="cell" style="top:848.0px;right:613.0px">0</div>
<div class="cell" style="top:848.0px;right:513.0px">0</div>
<div class="cell" style="top:848.0px;right:426.5px">0%</div>
<div class="cell" style="top:848.0px;right:337.0px">00:22:37</div>
<div class="cell" style="top:848.0px;right:224.2px">0</div>
<div class="cell" style="top:848.0px;right:149.0px">0</div>
<div class="rowbg" style="top:865.4px"></div>
<div class="cell" style="top:867.1px;right:1063.0px">429</div>
<div class="cell" style="top:867.1px;right:978.5px">429</div>
<div class="cell" style="top:867.1px;right:920.4px">100%</div>
<div class="cell" style="top:867.1px;right:852.0px">0</div>
<div class="cell" style="top:867.1px;right:783.4px">0%</div>
<div class="cell" style="top:867.1px;right:697.0px">429</div>
<div class="cell" style="top:867.1px;right:613.0px">0</div>
<div class="cell" style="top:867.1px;right:513.0px">8</div>
<div class="cell" style="top:867.1px;right:426.5px">2%</div>
<div class="cell" style="top:867.1px;right:337.0px">00:36:15</div>
<div class="cell" style="top:867.1px;right:224.2px">426</div>
<div class="cell" style="top:867.1px;right:149.0px">0</div>
<div class="cell" style="top:886.1px;right:1063.0px">36</div>
<div class="cell" style="top:886.1px;right:978.5px">36</div>
<div class="cell" style="top:886.1px;right:920.4px">100%</div>
<div class="cell" style="top:886.1px;right:852.0px">0</div>
<div class="cell" style="top:886.1px;right:783.4px">0%</div>
<div class="cell" style="top:886.1px;right:697.0px">36</div>
<div class="cell" style="top:886.1px;right:613.0px">0</div>
<div class="cell" style="top:886.1px;right:513.0px">10</div>
<div class="cell" style="top:886.1px;right:426.5px">28%</div>
<div class="cell" style="top:886.1px;right:337.0px">00:10:59</div>
<div class="cell" style="top:886.1px;right:224.2px">8</div>
<div class="cell" style="top:886.1px;right:149.0px">0</div>
<div class="rowbg" style="top:903.4px"></div>
<div class="cell" style="top:905.1px;right:1063.0px">16,577</div>
<div class="cell" style="top:905.1px;right:978.5px">16565</div>
<div class="cell" style="top:905.1px;right:920.4px">100%</div>
<div class="cell" style="top:905.1px;right:852.0px">12</div>
<div class="cell" style="top:905.1px;right:783.4px">0%</div>
<div class="cell" style="top:905.1px;right:697.0px">16,561</div>
<div class="cell" style="top:905.1px;right:613.0px">0</div>
<div class="cell" style="top:905.1px;right:513.0px">1463</div>
<div class="cell" style="top:905.1px;right:426.5px">9%</div>
<div class="cell" style="top:905.1px;right:337.0px">00:07:47</div>
<div class="cell" style="top:905.1px;right:224.2px">16245</div>
<div class="cell" style="top:905.1px;right:149.0px">4</div>
<div class="abs" style="left:506.5px;top:694px;width:1px;height:226px;background:#2f8fe0"></div>
<div class="abs" style="left:1532px;top:615px;width:6px;height:305px;background:#a8a8a8;border-radius:3px 3px 0 0"></div>
<div class="abs" style="left:1637px;top:44px;width:9px;height:876px;background:linear-gradient(90deg,#e4e4e4,#f6f6f6 40%,#f2f2f2)"></div>
<div class="abs" style="left:1627px;top:661px;width:8px;height:203px;background:#c6c6c6;border-radius:4px"></div>
<div id="frame"></div>
</body></html>
